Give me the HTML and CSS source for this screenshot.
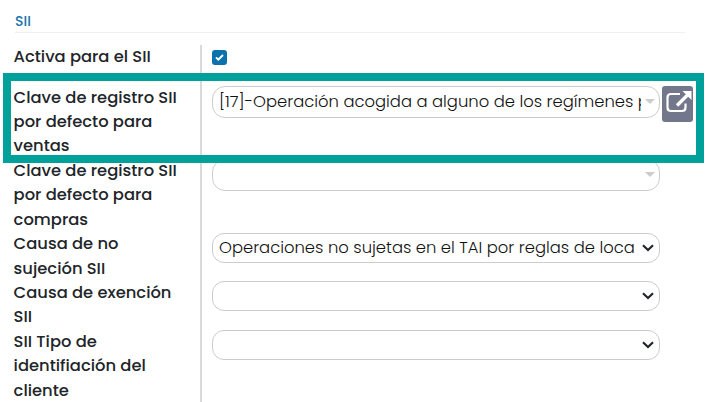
FILE: index.html
```html
<!DOCTYPE html>
<html lang="es">
<head>
<meta charset="utf-8">
<title>SII</title>
<link rel="stylesheet" href="styles.css">
</head>
<body>
<main class="panel">
  <h2 class="title">SII</h2>
  <div class="form">
    <div class="row row-check">
      <div class="label">Activa para el SII</div>
      <div class="field"><span class="check"><svg width="15" height="15" viewBox="0 0 15 15"><path d="M4 7.4l2.3 2.2L11 5" fill="none" stroke="#fff" stroke-width="2"/></svg></span></div>
    </div>
    <div class="row">
      <div class="label">Clave de registro SII<br>por defecto para<br>ventas</div>
      <div class="field">
        <div class="select lookup"><span class="value operation">[17]-Operación acogida a alguno de los regímenes p</span><i class="caret"></i></div>
        <span class="open"><svg width="31" height="36" viewBox="0 0 31 36" fill="none" stroke="#fff"><path d="M18 8H9Q5.500 8 5.500 11.500V21.500Q5.500 25 9 25H20Q23.500 25 23.500 21.500V17.500" stroke-width="2.200"/><path d="M15 19.500L26 8.500" stroke-width="3.400"/><path d="M20.500 5H29.500V14Z" fill="#fff" stroke="none"/></svg></span>
      </div>
    </div>
    <div class="row">
      <div class="label">Clave de registro SII<br>por defecto para<br>compras</div>
      <div class="field"><div class="select lookup"><i class="caret"></i></div></div>
    </div>
    <div class="row">
      <div class="label">Causa de no<br>sujeción SII</div>
      <div class="field low"><div class="select"><span class="value cause">Operaciones no sujetas en el TAI por reglas de loca</span><svg class="chevron" width="12" height="8" viewBox="0 0 12 8"><path d="M1 1.300L6 6L11 1.300"/></svg></div></div>
    </div>
    <div class="row">
      <div class="label">Causa de exención<br>SII</div>
      <div class="field"><div class="select"><svg class="chevron" width="12" height="8" viewBox="0 0 12 8"><path d="M1 1.300L6 6L11 1.300"/></svg></div></div>
    </div>
    <div class="row">
      <div class="label">SII Tipo de<br>identifiación del<br>cliente</div>
      <div class="field"><div class="select"><svg class="chevron" width="12" height="8" viewBox="0 0 12 8"><path d="M1 1.300L6 6L11 1.300"/></svg></div></div>
    </div>
  </div>
  <div class="highlight"></div>
</main>
</body>
</html>
```
FILE: styles.css
```css
* { box-sizing: border-box; }
body { margin: 0; background: #fff; color: #212529; font-family: Poppins, Inter, sans-serif; overflow: hidden; }
.panel { position: relative; height: 402px; overflow: hidden; }
.title { margin: 0 20px 12px 15px; height: 33px; padding-top: 10px; border-bottom: 1px solid #f0f0f0; font-size: 14px; line-height: 23px; font-weight: 500; color: #1a75aa; }
.form { padding-left: 13.600px; }
.row { display: grid; grid-template-columns: 186.400px 1fr; }
.row-check { height: 40.600px; }
.label { font-size: 16.350px; line-height: 24.420px; font-weight: 500; white-space: nowrap; }
.field { display: flex; gap: 2px; padding: 0.400px 0 0 10px; border-left: 2px solid #d9d9d9; }
.low { padding-top: 1px; }
.row-check .field { padding-top: 5px; }
.check { width: 15px; height: 15px; background: #0b72ad; border-radius: 3px; }
.check svg, .open svg { display: block; }
.select { display: flex; align-items: center; justify-content: space-between; width: 448px; height: 30px; padding: 0 5px 0 6px; border: 1px solid #ccc; border-radius: 12px; font-size: 16.400px; background: #fff; }
.lookup { height: 32px; padding-right: 4px; border-radius: 13px; }
.value { flex: none; overflow: hidden; white-space: nowrap; line-height: 26px; font-weight: 300; color: #111; }
.operation { width: 422px; }
.cause { width: 418px; }
.caret { margin: 0 0 1px auto; border: 5px solid transparent; border-top-color: #ccc; border-bottom: 0; }
.chevron { margin-left: auto; fill: none; stroke: #212529; stroke-width: 2.200; }
.open { width: 31px; height: 36px; background: #72778b; border-radius: 3px; overflow: hidden; }
.highlight { position: absolute; left: 3px; top: 73px; width: 701px; height: 90px; border: 8px solid #00a19b; }
```
